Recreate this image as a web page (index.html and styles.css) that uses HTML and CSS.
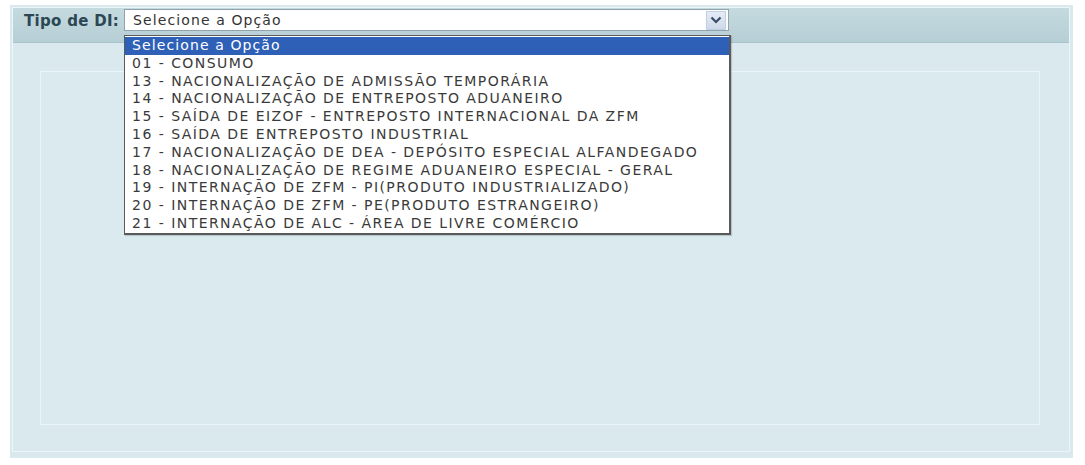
FILE: index.html
```html
<!DOCTYPE html>
<html lang="pt">
<head>
<meta charset="utf-8">
<title>Tipo de DI</title>
<link rel="stylesheet" href="styles.css">
</head>
<body>
<div class="panel">
  <div class="frame">
    <div class="header">
      <span class="label">Tipo de DI:</span>
      <div class="select-wrap">
        <div class="select">
          <span class="select-text">Selecione a Opção</span>
          <span class="arrow">
            <svg width="12" height="8" viewBox="0 0 12 8"><path d="M1.5 1.5 L6 6 L10.5 1.5" fill="none" stroke="#3a4a66" stroke-width="2.2"/></svg>
          </span>
        </div>
        <ul class="dropdown">
          <li class="selected">Selecione a Opção</li>
          <li>01 - CONSUMO</li>
          <li>13 - NACIONALIZAÇÃO DE ADMISSÃO TEMPORÁRIA</li>
          <li>14 - NACIONALIZAÇÃO DE ENTREPOSTO ADUANEIRO</li>
          <li>15 - SAÍDA DE EIZOF - ENTREPOSTO INTERNACIONAL DA ZFM</li>
          <li>16 - SAÍDA DE ENTREPOSTO INDUSTRIAL</li>
          <li>17 - NACIONALIZAÇÃO DE DEA - DEPÓSITO ESPECIAL ALFANDEGADO</li>
          <li>18 - NACIONALIZAÇÃO DE REGIME ADUANEIRO ESPECIAL - GERAL</li>
          <li>19 - INTERNAÇÃO DE ZFM - PI(PRODUTO INDUSTRIALIZADO)</li>
          <li>20 - INTERNAÇÃO DE ZFM - PE(PRODUTO ESTRANGEIRO)</li>
          <li>21 - INTERNAÇÃO DE ALC - ÁREA DE LIVRE COMÉRCIO</li>
        </ul>
      </div>
    </div>
    <div class="content">
      <div class="inner"></div>
    </div>
  </div>
</div>
</body>
</html>
```
FILE: styles.css
```css
html, body {
  margin: 0;
  padding: 0;
  background: #ffffff;
}
body {
  font-family: "DejaVu Sans", Verdana, sans-serif;
  width: 1085px;
  height: 465px;
  overflow: hidden;
}
.panel {
  margin: 5px 12px 0 10px;
  height: 453px;
  background: #dae9ed;
  padding: 2px 3px 6px 2px;
  box-sizing: border-box;
}
.frame {
  height: 100%;
  box-sizing: border-box;
  border: 1px solid #ecf5f7;
  display: flex;
  flex-direction: column;
}
.header {
  height: 34px;
  background: linear-gradient(#c4dadf, #b6ced5);
  border-bottom: 1px solid #aac4cb;
  display: flex;
  align-items: flex-start;
  padding-left: 11px;
  gap: 5px;
}
.label {
  font-weight: bold;
  font-size: 15px;
  color: #2c4753;
  margin-top: 4px;
  letter-spacing: 0.3px;
}
.select-wrap {
  position: relative;
  margin-top: 1px;
}
.select {
  width: 605px;
  height: 22px;
  box-sizing: border-box;
  background: #fff;
  border: 1px solid #8fa2ad;
  display: flex;
  align-items: center;
  justify-content: space-between;
  padding: 0 2px 0 8px;
}
.select-text {
  font-size: 14px;
  letter-spacing: 1.1px;
  color: #333;
}
.arrow {
  width: 20px;
  height: 19px;
  background: linear-gradient(#e4ecf7, #cdd9ea);
  border: 1px solid #c2cfe0;
  box-sizing: border-box;
  display: flex;
  align-items: center;
  justify-content: center;
}
.dropdown {
  position: absolute;
  left: 0;
  top: 26px;
  width: 607px;
  box-sizing: border-box;
  margin: 0;
  padding: 1px 0 0 0;
  list-style: none;
  background: #fff;
  border: 1px solid #5a5a5a;
  border-right-width: 2px;
  border-bottom-width: 2px;
  box-shadow: 1px 1px 1px rgba(0,0,0,0.15);
  font-size: 14px;
  letter-spacing: 1.45px;
  color: #3a3a3a;
  z-index: 2;
}
.dropdown li {
  height: 17.8px;
  line-height: 17.8px;
  padding-left: 7px;
  white-space: nowrap;
}
.dropdown li.selected {
  background: #2f60b8;
  color: #fff;
  letter-spacing: 1.1px;
}
.content {
  flex: 1;
  padding: 28px 29px 26px 27px;
}
.inner {
  height: 100%;
  box-sizing: border-box;
  border: 1px solid #eaf5f7;
  background: #dbeaee;
}
```
